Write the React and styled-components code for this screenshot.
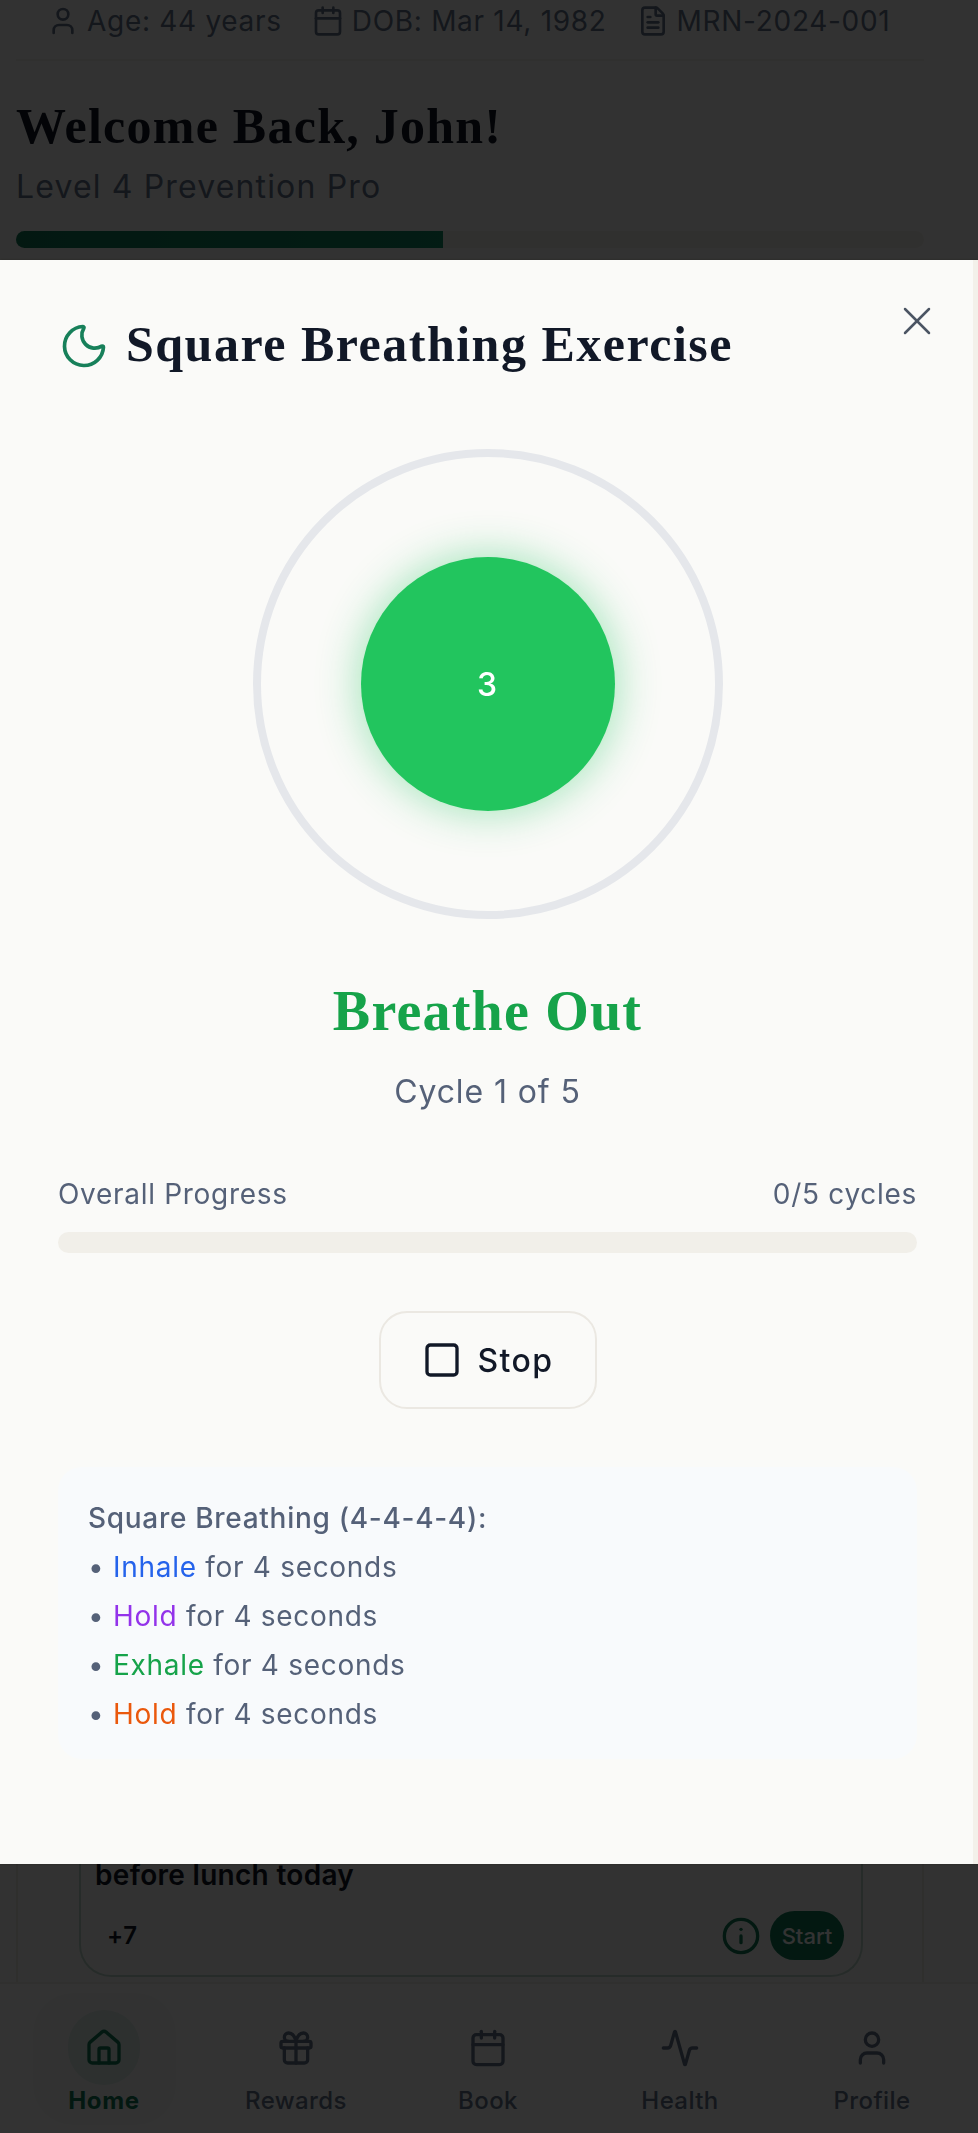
import React from 'react';
import styled, { createGlobalStyle } from 'styled-components';
import { User, Calendar, FileText, Moon, X, Square, Info, House, Gift, Activity } from 'lucide-react';

const GlobalStyle = createGlobalStyle`
  html, body {
    margin: 0;
    padding: 0;
    background: #fbfbf9;
  }
  * {
    box-sizing: border-box;
  }
`;

const sans = `Inter, "Liberation Sans", sans-serif`;
const serif = `"Liberation Serif", "DejaVu Serif", serif`;

/* page behind the dialog */
const Page = styled.div`
  display: flex;
  flex-direction: column;
  height: 2133px;
  overflow: hidden;
  background: #fbfbf9;
  font-family: ${sans};
  letter-spacing: 0.7px;
  color: #111827;
`;

const Main = styled.main`
  flex: 1;
  display: flex;
  flex-direction: column;
  min-height: 0;
  margin: 0 54px 0 16px;
`;

const MetaRow = styled.div`
  display: flex;
  align-items: center;
  gap: 30px;
  height: 61px;
  padding: 0 0 17px 31px;
  border-bottom: 2px solid #f1efe9;
  font-size: 28px;
  color: #64748b;
`;

const MetaItem = styled.span`
  display: flex;
  align-items: center;
  gap: 8px;
`;

const Welcome = styled.h1`
  margin: 37px 0 0;
  font: bold 50px/56px ${serif};
  letter-spacing: 1.25px;
  color: #111827;
`;

const Level = styled.p`
  margin: 9px 0 0;
  font-size: 32px;
  line-height: 48px;
  letter-spacing: 1.15px;
  color: #64748b;
`;

const XpTrack = styled.div`
  height: 17px;
  margin-top: 20px;
  border-radius: 9px;
  background: #f1efe9;
  overflow: hidden;
`;

const XpFill = styled.div`
  height: 100%;
  background: linear-gradient(90deg, #0f7a58, #0f8a64);
`;

const Spacer = styled.div`
  flex: 1;
`;

const TaskPanel = styled.section`
  margin: 0 54px 0 16px;
  padding: 0 59px 5px 61px;
  border: solid #ece9e2;
  border-width: 0 2px;
`;

const TaskCard = styled.article`
  padding: 0 17px 15px 14px;
  border: 2px solid #bdd8cc;
  border-top: 0;
  border-radius: 0 0 32px 32px;
`;

const TaskTitle = styled.h3`
  margin: 0 0 17px;
  font: 600 28px/38px ${sans};
  letter-spacing: 0.3px;
  color: #111827;
`;

const TaskFoot = styled.div`
  display: flex;
  align-items: center;
  justify-content: space-between;
  padding-left: 12px;
  font-size: 24px;
  font-weight: 600;
`;

const TaskActions = styled.div`
  display: flex;
  align-items: center;
  gap: 9px;
`;

const StartButton = styled.span`
  display: flex;
  align-items: center;
  justify-content: center;
  width: 74px;
  height: 49px;
  border-radius: 25px;
  background: #0f7a58;
  color: #fff;
  font-size: 22px;
  font-weight: 500;
  letter-spacing: 0;
`;

const Nav = styled.nav`
  display: grid;
  grid-template-columns: repeat(5, 1fr);
  height: 151px;
  padding: 9px 10px 8px 8px;
  border-top: 2px solid #f1efe9;
  background: #fff;
`;

const NavItem = styled.a`
  display: flex;
  flex-direction: column;
  align-items: center;
  justify-self: center;
  width: 143px;
  padding-top: 17px;
  border-radius: 40px;
  font-size: 24px;
  line-height: 32px;
  letter-spacing: ${p => (p.$active ? '0.7px' : '0.4px')};
  font-weight: ${p => (p.$active ? 700 : 500)};
  color: ${p => (p.$active ? '#0f7a58' : '#64748b')};
  background: ${p => (p.$active ? 'rgba(15, 122, 88, 0.03)' : 'transparent')};
`;

const NavIcon = styled.span`
  display: flex;
  align-items: center;
  justify-content: center;
  width: 72px;
  height: 75px;
  border-radius: 36px;
  background: ${p => (p.$active ? 'rgba(15, 122, 88, 0.1)' : 'transparent')};
`;

/* dialog */
const Overlay = styled.div`
  position: fixed;
  inset: 0;
  padding-top: 260px;
  background: rgba(0, 0, 0, 0.8);
  font-family: ${sans};
`;

const Dialog = styled.div`
  position: relative;
  display: flex;
  flex-direction: column;
  height: 1604px;
  padding: 48px 56px 0 58px;
  border-right: 5px solid #f3f0ea;
  background: #fafaf8;
  box-shadow: 0 0 3px rgba(0, 0, 0, 0.3);
  letter-spacing: 0.7px;
`;

const CloseButton = styled.button`
  position: absolute;
  top: 37px;
  right: 32px;
  display: flex;
  padding: 0;
  border: 0;
  background: none;
  color: #4b5563;
`;

const DialogHead = styled.header`
  display: flex;
  align-items: center;
  gap: 16px;
  height: 72px;
`;

const TitleIcon = styled(Moon)`
  margin-top: 4px;
  color: #17805a;
`;

const DialogTitle = styled.h2`
  margin: 0;
  font: bold 50px/72px ${serif};
  letter-spacing: 1.5px;
  color: #111827;
`;

const Ring = styled.div`
  display: flex;
  align-items: center;
  justify-content: center;
  align-self: center;
  width: 470px;
  height: 470px;
  margin-top: 69px;
  border: 8px solid #e5e7eb;
  border-radius: 50%;
`;

const Orb = styled.div`
  display: flex;
  align-items: center;
  justify-content: center;
  width: 254px;
  height: 254px;
  border-radius: 50%;
  background: #22c55e;
  box-shadow: 0 0 44px rgba(34, 197, 94, 0.45);
  color: #fff;
  font-size: 32px;
  font-weight: 500;
`;

const Phase = styled.h3`
  margin: 56px 0 0;
  text-align: center;
  font: bold 56px/72px ${serif};
  letter-spacing: 1.2px;
  color: #16a34a;
`;

const Cycle = styled.p`
  margin: 21px 0 0;
  text-align: center;
  font-size: 32px;
  line-height: 48px;
  letter-spacing: 0.9px;
  color: #556178;
`;

const ProgressHead = styled.div`
  display: flex;
  justify-content: space-between;
  margin-top: 58px;
  font-size: 28px;
  line-height: 40px;
  color: #556178;
`;

const ProgressTrack = styled.div`
  height: 21px;
  margin-top: 18px;
  border-radius: 11px;
  background: #f1efe9;
`;

const StopButton = styled.button`
  display: flex;
  align-items: center;
  justify-content: center;
  align-self: center;
  gap: 16px;
  width: 218px;
  height: 98px;
  margin-top: 58px;
  border: 2px solid #ebe8e2;
  border-radius: 28px;
  background: #fafaf8;
  color: #111827;
  font: 500 32px ${sans};
  letter-spacing: 1.4px;
`;

const InfoBox = styled.div`
  margin-top: 58px;
  padding: 27px 30px 20px;
  border-radius: 24px;
  background: #f8fafc;
  font-size: 28px;
  line-height: 49px;
  color: #556178;
`;

const InfoTitle = styled.div`
  font-weight: 500;
`;

const Phrase = styled.span`
  color: ${p => p.$color};
`;

const steps = [
  ['Inhale', '#2563eb'],
  ['Hold', '#9333ea'],
  ['Exhale', '#16a34a'],
  ['Hold', '#ea580c'],
];

const navItems = [
  ['Home', House],
  ['Rewards', Gift],
  ['Book', Calendar],
  ['Health', Activity],
  ['Profile', User],
];

export default function App() {
  return (
    <>
      <GlobalStyle />
      <Page>
        <Main>
          <MetaRow>
            <MetaItem><User size={32} />Age: 44 years</MetaItem>
            <MetaItem><Calendar size={32} />DOB: Mar 14, 1982</MetaItem>
            <MetaItem><FileText size={32} />MRN-2024-001</MetaItem>
          </MetaRow>
          <Welcome>Welcome Back, John!</Welcome>
          <Level>Level 4 Prevention Pro</Level>
          <XpTrack>
            <XpFill style={{ width: '47%' }} />
          </XpTrack>
          <Spacer />
        </Main>
        <TaskPanel>
          <TaskCard>
            <TaskTitle>before lunch today</TaskTitle>
            <TaskFoot>
              <span>+7</span>
              <TaskActions>
                <Info size={40} color="#0f7a58" />
                <StartButton>Start</StartButton>
              </TaskActions>
            </TaskFoot>
          </TaskCard>
        </TaskPanel>
        <Nav>
          {navItems.map(([label, Icon], i) => (
            <NavItem key={label} $active={i === 0}>
              <NavIcon $active={i === 0}><Icon size={40} /></NavIcon>
              {label}
            </NavItem>
          ))}
        </Nav>
      </Page>

      <Overlay>
        <Dialog>
          <CloseButton><X size={48} strokeWidth={1.25} /></CloseButton>
          <DialogHead>
            <TitleIcon size={52} strokeWidth={1.7} />
            <DialogTitle>Square Breathing Exercise</DialogTitle>
          </DialogHead>
          <Ring>
            <Orb>3</Orb>
          </Ring>
          <Phase>Breathe Out</Phase>
          <Cycle>Cycle 1 of 5</Cycle>
          <ProgressHead>
            <span>Overall Progress</span>
            <span>0/5 cycles</span>
          </ProgressHead>
          <ProgressTrack />
          <StopButton><Square size={40} />Stop</StopButton>
          <InfoBox>
            <InfoTitle>Square Breathing (4-4-4-4):</InfoTitle>
            {steps.map(([word, color], i) => (
              <div key={i}>• <Phrase $color={color}>{word}</Phrase> for 4 seconds</div>
            ))}
          </InfoBox>
        </Dialog>
      </Overlay>
    </>
  );
}
